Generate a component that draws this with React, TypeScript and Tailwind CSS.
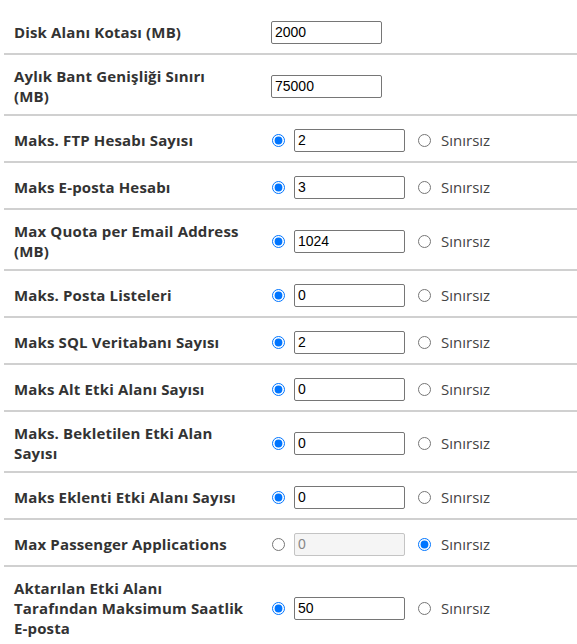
const rows: {
  label: string;
  value: string;
  radio?: boolean;
  unlimited?: boolean;
}[] = [
  { label: 'Disk Alanı Kotası (MB)', value: '2000' },
  { label: 'Aylık Bant Genişliği Sınırı\n(MB)', value: '75000' },
  { label: 'Maks. FTP Hesabı Sayısı', value: '2', radio: true },
  { label: 'Maks E-posta Hesabı', value: '3', radio: true },
  { label: 'Max Quota per Email Address\n(MB)', value: '1024', radio: true },
  { label: 'Maks. Posta Listeleri', value: '0', radio: true },
  { label: 'Maks SQL Veritabanı Sayısı', value: '2', radio: true },
  { label: 'Maks Alt Etki Alanı Sayısı', value: '0', radio: true },
  { label: 'Maks. Bekletilen Etki Alan\nSayısı', value: '0', radio: true },
  { label: 'Maks Eklenti Etki Alanı Sayısı', value: '0', radio: true },
  { label: 'Max Passenger Applications', value: '0', radio: true, unlimited: true },
  { label: 'Aktarılan Etki Alanı\nTarafından Maksimum Saatlik\nE-posta', value: '50', radio: true },
];

export default function App() {
  return (
    <div className="bg-white min-h-screen pt-[8px] pl-[4px] font-['Open_Sans',sans-serif] text-[#333]">
      {rows.map((row, i) => (
        <div
          key={row.label}
          className={`flex items-center pt-[11px] pb-[8px] ${i < rows.length - 1 ? 'border-b-2 border-[#d0d0d0]' : ''}`}
        >
          <div className="w-[267px] shrink-0 pl-[10px] pr-[12px] text-[15px] leading-[20px] font-bold tracking-[0.15px] whitespace-pre-line">
            {row.label}
          </div>
          <div className="flex items-center h-[26px]">
            {row.radio && (
              <input
                type="radio"
                name={`r${i}`}
                defaultChecked={!row.unlimited}
                className="m-0 ml-[1px] w-[13px] h-[13px] mr-[9px]"
              />
            )}
            <input
              type="text"
              defaultValue={row.value}
              disabled={row.unlimited}
              className="w-[111px] h-[23px] border border-[#767676] rounded-[2px] px-[3px] text-[14px] font-['Liberation_Sans',sans-serif] text-black disabled:bg-[#f5f5f5] disabled:border-[#c4c4c4] disabled:text-[#888]"
            />
            {row.radio && (
              <label className="flex items-center ml-[13px]">
                <input
                  type="radio"
                  name={`r${i}`}
                  defaultChecked={row.unlimited}
                  className="m-0 w-[13px] h-[13px] mr-[10px]"
                />
                <span className="text-[15px] text-[#444]">Sınırsız</span>
              </label>
            )}
          </div>
        </div>
      ))}
    </div>
  );
}
